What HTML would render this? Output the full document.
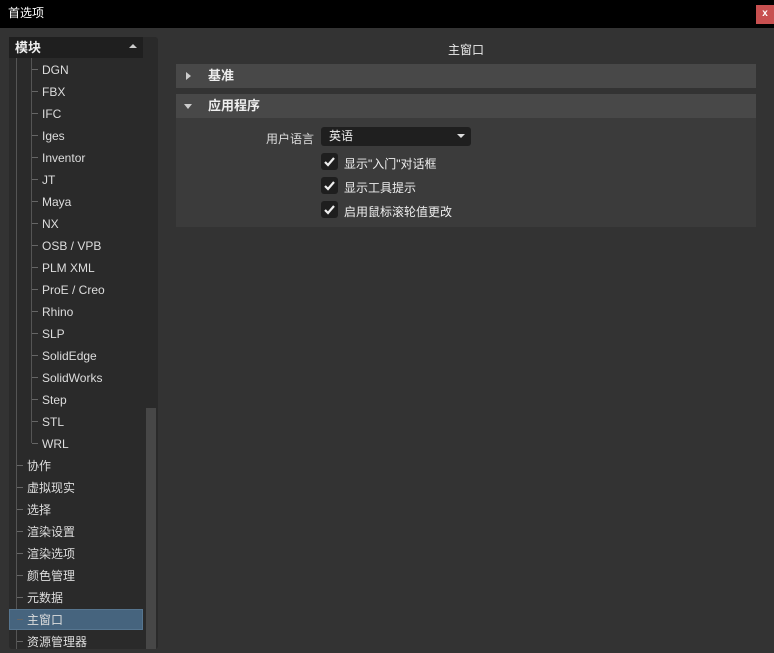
<!DOCTYPE html>
<html><head><meta charset="utf-8"><style>
*{margin:0;padding:0;box-sizing:border-box}
body{width:774px;height:649px;background:#333;font-family:"Liberation Sans","Noto Sans CJK SC",sans-serif;font-size:12px;color:#ddd;position:relative;overflow:hidden}
.a{position:absolute}
.title{left:0;top:0;width:774px;height:28px;background:#000;color:#fff;font-size:12px;line-height:26px;padding-left:8px}
.close{left:756px;top:5px;width:18px;height:19px;background:#c85050;color:#fff;font-weight:bold;font-size:10px;text-align:center;line-height:18px}
.left{left:9px;top:37px;width:149px;height:612px;background:#2a2a2a;border-radius:3px}
.lh{left:9px;top:37px;width:134px;height:21px;background:#1f1f1f;color:#eee;font-weight:bold;font-size:13px;line-height:21px;padding-left:6px}
.it{height:22px;line-height:22px;color:#ddd}
.sb{left:146px;top:408px;width:10px;height:241px;background:#474747}
.vl{background:#555;width:1px}
.sec{left:176px;width:580px;height:24px;background:#484848;font-weight:bold;font-size:13px;line-height:24px;padding-left:32px;color:#eee}
.chk{width:17px;height:17px;background:#1e1e1e;border-radius:3px}
</style></head><body>
<div class="a title">首选项</div>
<div class="a close">x</div>
<div class="a left"></div>
<div class="a lh">模块</div>
<div class="a" style="left:129px;top:44px;width:0;height:0;border-left:4px solid transparent;border-right:4px solid transparent;border-bottom:4px solid #ccc"></div>
<div class="a vl" style="left:16px;top:58px;height:591px"></div>
<div class="a vl" style="left:31px;top:58px;height:385px"></div>
<div class="a sb"></div>
<div class="a" style="left:9px;top:609px;width:134px;height:21px;background:#46647e;border:1px solid #56758f"></div>
<div class="a" style="left:42px;top:59px">
<div class="it">DGN</div><div class="it">FBX</div><div class="it">IFC</div><div class="it">Iges</div><div class="it">Inventor</div><div class="it">JT</div><div class="it">Maya</div><div class="it">NX</div><div class="it">OSB / VPB</div><div class="it">PLM XML</div><div class="it">ProE / Creo</div><div class="it">Rhino</div><div class="it">SLP</div><div class="it">SolidEdge</div><div class="it">SolidWorks</div><div class="it">Step</div><div class="it">STL</div><div class="it">WRL</div>
</div>
<div class="a" style="left:27px;top:455px">
<div class="it">协作</div><div class="it">虚拟现实</div><div class="it">选择</div><div class="it">渲染设置</div><div class="it">渲染选项</div><div class="it">颜色管理</div><div class="it">元数据</div><div class="it">主窗口</div><div class="it">资源管理器</div>
</div>
<svg class="a" style="left:0;top:0" width="160" height="649">
<g stroke="#666" stroke-width="1">
<line x1="32" y1="69.5" x2="38" y2="69.5"/><line x1="32" y1="91.5" x2="38" y2="91.5"/><line x1="32" y1="113.5" x2="38" y2="113.5"/><line x1="32" y1="135.5" x2="38" y2="135.5"/><line x1="32" y1="157.5" x2="38" y2="157.5"/><line x1="32" y1="179.5" x2="38" y2="179.5"/><line x1="32" y1="201.5" x2="38" y2="201.5"/><line x1="32" y1="223.5" x2="38" y2="223.5"/><line x1="32" y1="245.5" x2="38" y2="245.5"/><line x1="32" y1="267.5" x2="38" y2="267.5"/><line x1="32" y1="289.5" x2="38" y2="289.5"/><line x1="32" y1="311.5" x2="38" y2="311.5"/><line x1="32" y1="333.5" x2="38" y2="333.5"/><line x1="32" y1="355.5" x2="38" y2="355.5"/><line x1="32" y1="377.5" x2="38" y2="377.5"/><line x1="32" y1="399.5" x2="38" y2="399.5"/><line x1="32" y1="421.5" x2="38" y2="421.5"/><line x1="32" y1="443.5" x2="38" y2="443.5"/>
<line x1="17" y1="465.5" x2="23" y2="465.5"/><line x1="17" y1="487.5" x2="23" y2="487.5"/><line x1="17" y1="509.5" x2="23" y2="509.5"/><line x1="17" y1="531.5" x2="23" y2="531.5"/><line x1="17" y1="553.5" x2="23" y2="553.5"/><line x1="17" y1="575.5" x2="23" y2="575.5"/><line x1="17" y1="597.5" x2="23" y2="597.5"/><line x1="17" y1="619.5" x2="23" y2="619.5"/><line x1="17" y1="641.5" x2="23" y2="641.5"/>
</g></svg>
<div class="a" style="left:176px;top:41px;width:580px;text-align:center;color:#eee">主窗口</div>
<div class="a sec" style="top:64px">基准</div>
<div class="a" style="left:186px;top:72px;width:0;height:0;border-top:4px solid transparent;border-bottom:4px solid transparent;border-left:5px solid #ccc"></div>
<div class="a sec" style="top:94px">应用程序</div>
<div class="a" style="left:184px;top:104px;width:0;height:0;border-left:4px solid transparent;border-right:4px solid transparent;border-top:5px solid #ccc"></div>
<div class="a" style="left:176px;top:118px;width:580px;height:109px;background:#3b3b3b"></div>
<div class="a" style="left:266px;top:130px;color:#ddd">用户语言</div>
<div class="a" style="left:321px;top:127px;width:150px;height:19px;background:#1f1f1f;border-radius:3px;line-height:19px;padding-left:8px;color:#eee">英语</div>
<div class="a" style="left:457px;top:134px;width:0;height:0;border-left:4px solid transparent;border-right:4px solid transparent;border-top:4px solid #ddd"></div>
<div class="a chk" style="left:321px;top:153px"></div>
<div class="a chk" style="left:321px;top:177px"></div>
<div class="a chk" style="left:321px;top:201px"></div>
<svg class="a" style="left:321px;top:153px" width="17" height="66"><g fill="none" stroke="#eee" stroke-width="2.2"><path d="M4 9l3 3 6-7"/><path d="M4 33l3 3 6-7"/><path d="M4 57l3 3 6-7"/></g></svg>
<div class="a" style="left:344px;top:155px;color:#eee">显示"入门"对话框</div>
<div class="a" style="left:344px;top:179px;color:#eee">显示工具提示</div>
<div class="a" style="left:344px;top:203px;color:#eee">启用鼠标滚轮值更改</div>
</body></html>
